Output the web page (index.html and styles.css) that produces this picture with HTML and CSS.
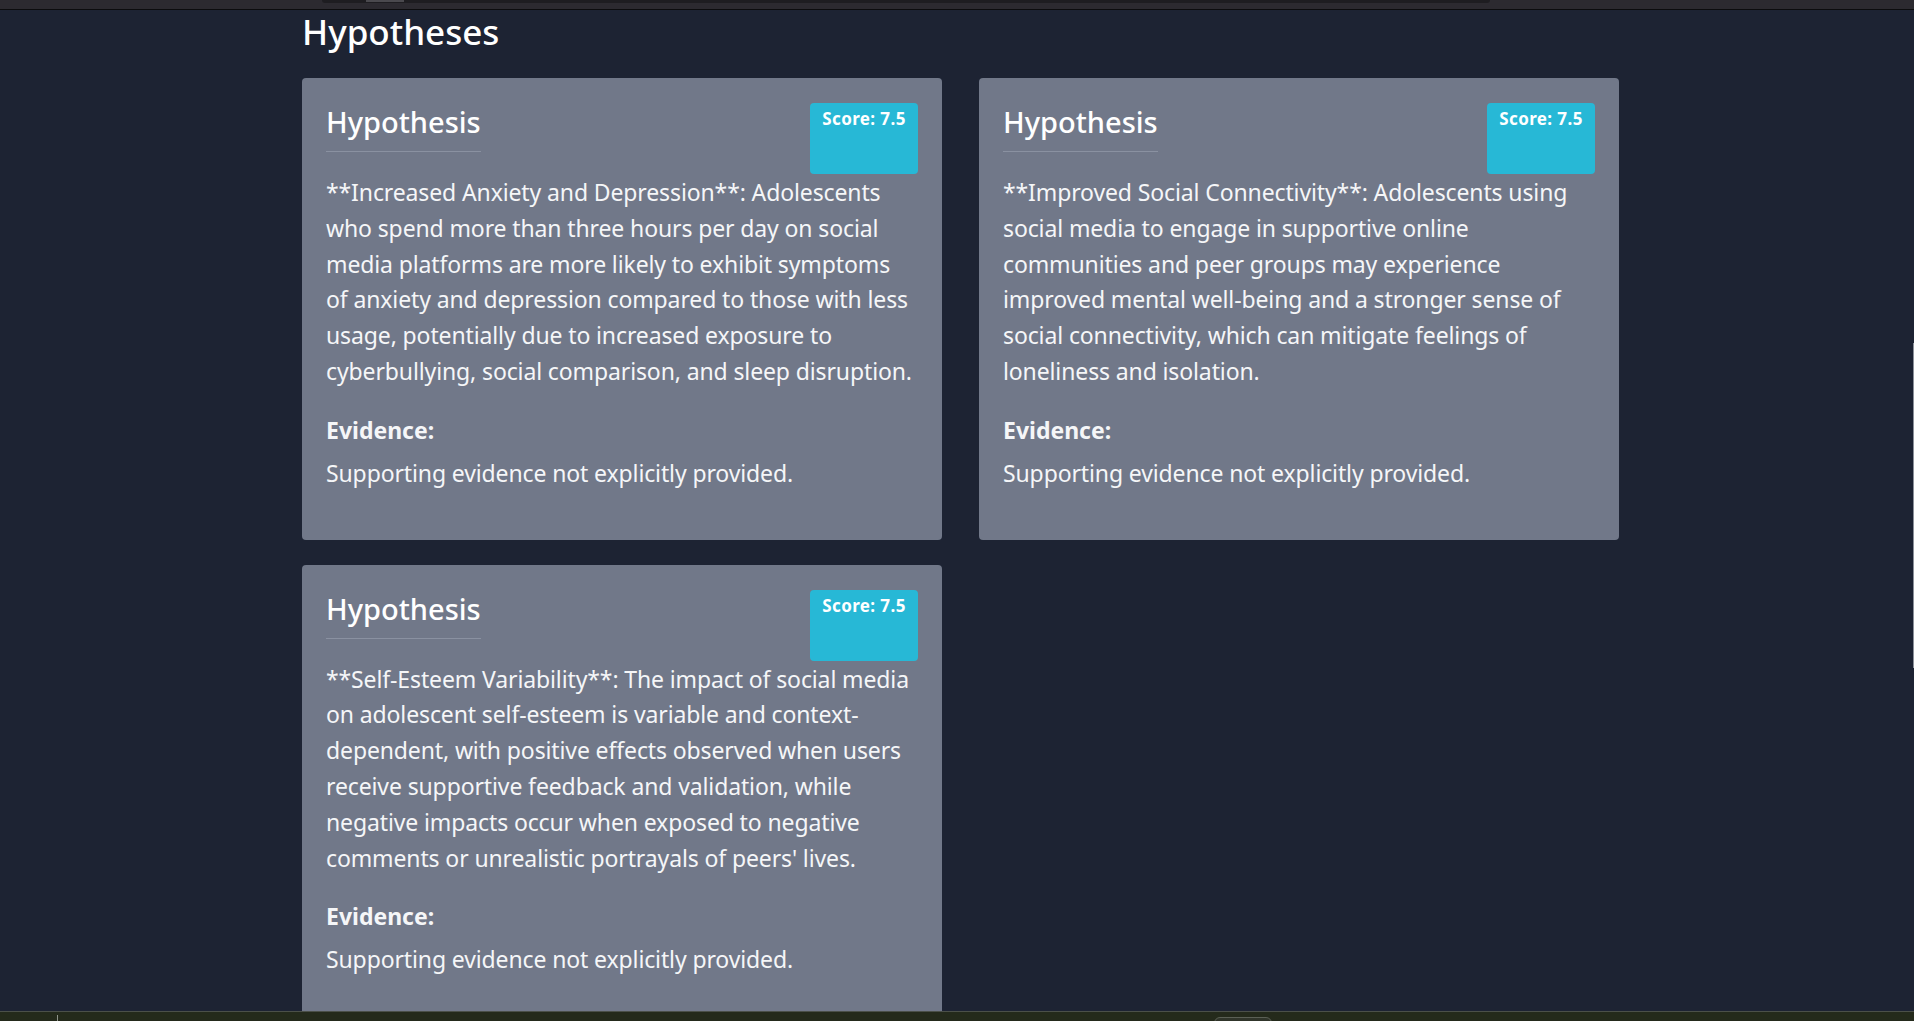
FILE: index.html
```html
<!DOCTYPE html>
<html lang="en">
<head>
<meta charset="utf-8">
<title>Hypotheses</title>
<link rel="stylesheet" href="styles.css">
</head>
<body>
<div class="topstrip">
  <div class="topstrip-bar"><span class="topstrip-tab"></span></div>
</div>
<main class="page">
  <h2 class="page-title">Hypotheses</h2>
  <div class="grid">
    <section class="card">
      <div class="card-head">
        <h3 class="card-title">Hypothesis</h3>
        <span class="badge">Score: 7.5</span>
      </div>
      <p class="card-text">**Increased Anxiety and Depression**: Adolescents who spend more than three hours per day on social media platforms are more likely to exhibit symptoms of&nbsp;anxiety and depression compared to those with less usage, potentially due to increased exposure to cyberbullying, social comparison, and sleep disruption.</p>
      <h4 class="card-label">Evidence:</h4>
      <p class="card-text">Supporting evidence not explicitly provided.</p>
    </section>
    <section class="card">
      <div class="card-head">
        <h3 class="card-title">Hypothesis</h3>
        <span class="badge">Score: 7.5</span>
      </div>
      <p class="card-text">**Improved Social Connectivity**: Adolescents using social media to engage in supportive online communities and peer groups may experience improved mental well-being and a stronger sense of social connectivity, which can mitigate feelings of loneliness and isolation.</p>
      <h4 class="card-label">Evidence:</h4>
      <p class="card-text">Supporting evidence not explicitly provided.</p>
    </section>
    <section class="card">
      <div class="card-head">
        <h3 class="card-title">Hypothesis</h3>
        <span class="badge">Score: 7.5</span>
      </div>
      <p class="card-text">**Self-Esteem Variability**: The impact of social media on adolescent self-esteem is variable and context-dependent, with positive effects observed when users receive supportive feedback and validation, while negative impacts occur when exposed to negative comments or unrealistic portrayals of peers' lives.</p>
      <h4 class="card-label">Evidence:</h4>
      <p class="card-text">Supporting evidence not explicitly provided.</p>
    </section>
  </div>
</main>
<div class="scroll-thumb"></div>
<div class="taskbar">
  <span class="taskbar-tick"></span>
  <span class="taskbar-item"></span>
</div>
</body>
</html>
```

FILE: styles.css
```css
html, body {
  margin: 0;
  padding: 0;
  height: 1021px;
  overflow: hidden;
}

body {
  background: #1d2333;
  color: #f5f6f8;
  font-family: "Noto Sans", "Open Sans", sans-serif;
}

.topstrip {
  height: 9px;
  background: #2c2a30;
  border-bottom: 1px solid #0c0c0e;
  position: relative;
}

.topstrip-bar {
  position: absolute;
  left: 322px;
  width: 1168px;
  top: 0;
  height: 3px;
  background: #1e1d21;
  border-radius: 0 0 3px 3px;
}

.topstrip-tab {
  position: absolute;
  left: 44px;
  width: 38px;
  top: 0;
  height: 2px;
  background: #4a494e;
}

.page {
  width: 1317px;
  margin-left: 302px;
}

.page-title {
  margin: 1px 0 25px;
  font-size: 35px;
  line-height: 42px;
  font-weight: 500;
  color: #ffffff;
}

.grid {
  display: grid;
  grid-template-columns: 640px 640px;
  column-gap: 37px;
  row-gap: 25px;
  align-items: start;
}

.card {
  background: #717889;
  border-radius: 4px;
  padding: 24px;
}

.card-head {
  display: flex;
  justify-content: space-between;
  align-items: stretch;
  margin-bottom: 1px;
}

.card-title {
  margin: 2px 0 22px;
  padding-bottom: 11px;
  border-bottom: 1px solid #8a91a1;
  font-size: 29px;
  line-height: 36px;
  font-weight: 500;
  color: #ffffff;
}

.badge {
  width: 108px;
  box-sizing: border-box;
  margin-top: 1px;
  background: #27b8d6;
  border-radius: 4px;
  color: #ffffff;
  font-size: 17px;
  font-weight: 700;
  letter-spacing: 0.4px;
  text-align: center;
  padding-top: 5px;
  line-height: 22px;
}

.card-text {
  margin: 0 0 24px;
  font-size: 23px;
  line-height: 35.8px;
  letter-spacing: -0.12px;
}

.card-label {
  margin: -2px 0 8px;
  font-size: 23px;
  line-height: 36px;
  font-weight: 700;
}

.scroll-thumb {
  position: fixed;
  right: 0;
  top: 343px;
  width: 1px;
  height: 325px;
  background: #8b909a;
}

.taskbar {
  position: fixed;
  left: 0;
  right: 0;
  bottom: 0;
  height: 9px;
  border-top: 1px solid #4b5049;
  background: #242a1b;
}

.taskbar-tick {
  position: absolute;
  left: 57px;
  top: 3px;
  width: 1px;
  height: 6px;
  background: #8f948a;
}

.taskbar-item {
  position: absolute;
  left: 1214px;
  top: 5px;
  width: 56px;
  height: 8px;
  border: 1px solid #5b6055;
  border-radius: 6px 6px 0 0;
  background: #30352a;
}
```
